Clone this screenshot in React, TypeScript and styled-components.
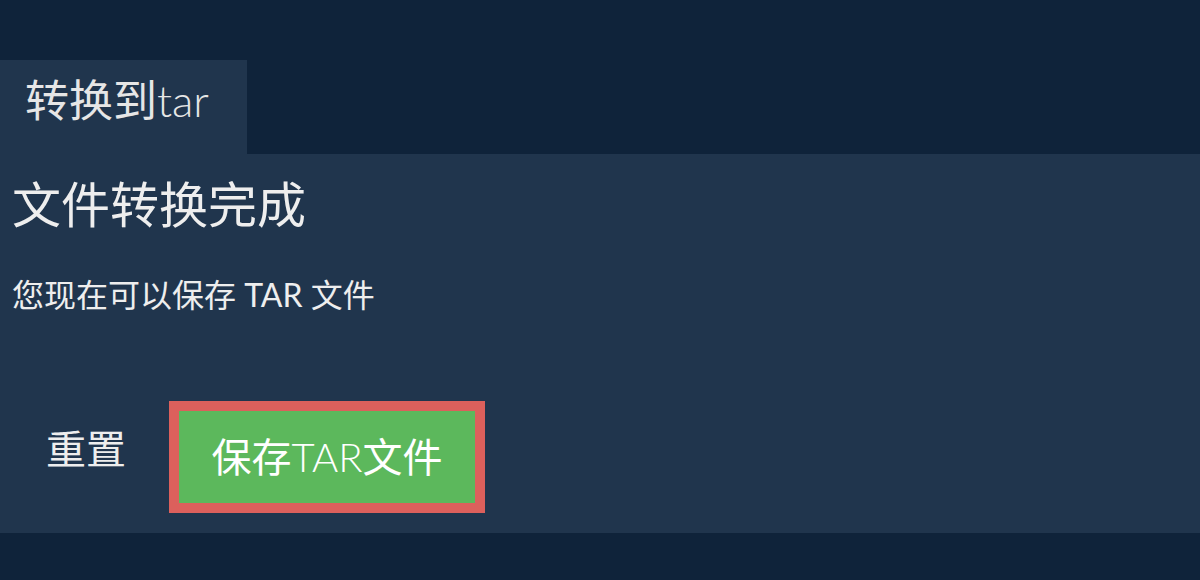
import * as React from 'react';
import styled, { createGlobalStyle } from 'styled-components';

const GlobalStyle = createGlobalStyle`
  html, body {
    margin: 0;
    padding: 0;
    background: #0f233a;
  }
  body {
    font-family: Lato, "Noto Sans CJK SC", sans-serif;
    color: #ececec;
  }
`;

const Page = styled.div`
  width: 1200px;
  height: 580px;
  background: #0f233a;
  padding-top: 60px;
  box-sizing: border-box;
`;

const Tabs = styled.div`
  display: flex;
`;

const Tab = styled.div`
  width: 247px;
  height: 94px;
  box-sizing: border-box;
  padding: 14px 0 0 25px;
  background: #20354d;
  font-size: 44px;
  line-height: 1.2;
  color: #e6e6e6;
  white-space: nowrap;
`;

// latin part of the labels is set in the light cut of Lato
const Latin = styled.span`
  font-family: Lato, sans-serif;
  font-weight: 300;
`;

const Panel = styled.section`
  background: #20354d;
  height: 379px;
  box-sizing: border-box;
  padding: 21px 12px 20px;
  display: flex;
  flex-direction: column;
`;

const Title = styled.h1`
  margin: 0;
  font-size: 49px;
  font-weight: 400;
  line-height: 1.2;
  color: #eeeeee;
`;

const Message = styled.p`
  margin: 42px 0 0;
  font-size: 32px;
  line-height: 1.2;
  color: #eeeeee;
`;

const Actions = styled.div`
  display: flex;
  align-items: flex-start;
  gap: 9px;
  margin-top: 87px;
`;

const ResetButton = styled.button`
  margin-top: 24px;
  padding: 0 34px;
  border: none;
  background: transparent;
  font-family: inherit;
  font-size: 40px;
  line-height: 1.2;
  color: #eeeeee;
  cursor: pointer;
`;

const SaveButton = styled.button`
  height: 112px;
  width: 316px;
  box-sizing: border-box;
  border: 10px solid #dc605c;
  background: #5cb85c;
  font-family: inherit;
  font-size: 40px;
  line-height: 1.2;
  color: #ffffff;
  display: flex;
  align-items: center;
  justify-content: center;
  padding: 0;
  cursor: pointer;
`;

export default function App() {
  return (
    <Page>
      <GlobalStyle />
      <Tabs>
        <Tab>
          转换到<Latin>tar</Latin>
        </Tab>
      </Tabs>
      <Panel>
        <Title>文件转换完成</Title>
        <Message>您现在可以保存 TAR 文件</Message>
        <Actions>
          <ResetButton>重置</ResetButton>
          <SaveButton>
            保存<Latin>TAR</Latin>文件
          </SaveButton>
        </Actions>
      </Panel>
    </Page>
  );
}
